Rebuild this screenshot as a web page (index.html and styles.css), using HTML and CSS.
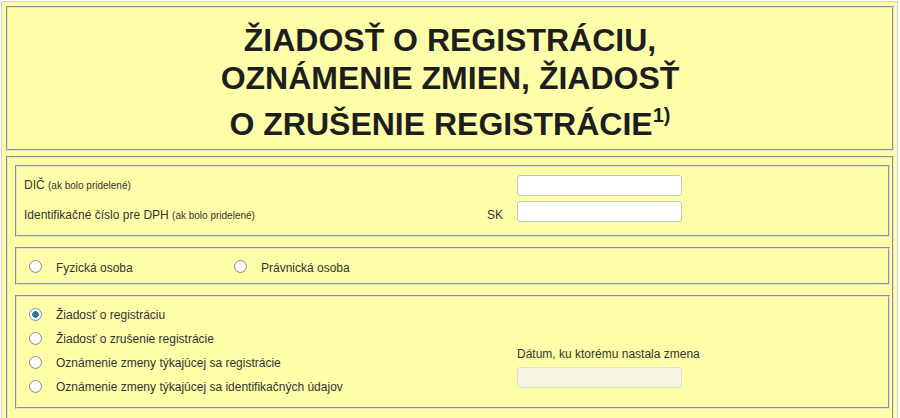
FILE: index.html
```html
<!DOCTYPE html>
<html lang="sk">
<head>
<meta charset="utf-8">
<title>Žiadosť o registráciu</title>
<link rel="stylesheet" href="styles.css">
</head>
<body>
<div class="page">
  <div class="box header">
    <h1 class="title">
      <span class="tline">ŽIADOSŤ O REGISTRÁCIU,</span>
      <span class="tline">OZNÁMENIE ZMIEN, ŽIADOSŤ</span>
      <span class="tline last">O ZRUŠENIE REGISTRÁCIE<sup class="note">1)</sup></span>
    </h1>
  </div>
  <div class="box main">
    <div class="sub ids">
      <div class="row">
        <div class="lcell"><span class="lbl">DIČ <small>(ak bolo pridelené)</small></span></div>
        <input class="field" type="text">
      </div>
      <div class="row">
        <div class="lcell low"><span class="lbl">Identifikačné číslo pre DPH <small>(ak bolo pridelené)</small></span><span class="sk">SK</span></div>
        <input class="field" type="text">
      </div>
    </div>
    <div class="sub persons">
      <label class="opt wide"><input type="radio" name="osoba" class="radio"><span>Fyzická osoba</span></label>
      <label class="opt"><input type="radio" name="osoba" class="radio"><span>Právnická osoba</span></label>
    </div>
    <div class="sub kinds">
      <div class="optlist">
        <label class="opt"><input type="radio" name="druh" class="radio" checked><span>Žiadosť o registráciu</span></label>
        <label class="opt"><input type="radio" name="druh" class="radio"><span>Žiadosť o zrušenie registrácie</span></label>
        <label class="opt"><input type="radio" name="druh" class="radio"><span>Oznámenie zmeny týkajúcej sa registrácie</span></label>
        <label class="opt"><input type="radio" name="druh" class="radio"><span>Oznámenie zmeny týkajúcej sa identifikačných údajov</span></label>
      </div>
      <div class="datecol">
        <span class="lbl">Dátum, ku ktorému nastala zmena</span>
        <input class="field" type="text" disabled>
      </div>
    </div>
    <div class="sub spacer"></div>
  </div>
</div>
</body>
</html>
```
FILE: styles.css
```css
html, body {
  margin: 0;
  padding: 0;
  background: #ffffff;
}
body {
  font-family: "Liberation Sans", Arial, sans-serif;
  font-size: 12px;
  color: #333333;
  overflow: hidden;
}
.page {
  margin: 1px 0 0 1px;
  width: 897px;
  box-sizing: border-box;
  border: 1px solid #d2d2d6;
  border-bottom: none;
  background: #ffffaa;
  padding: 4px 3px 0 4px;
}
.box,
.sub {
  border: 2px groove #e4e4d6;
}
.header {
  padding: 13px 0 0 0;
  height: 128px;
}
.title {
  margin: 0;
  font-family: "Liberation Sans", Arial, sans-serif;
  font-weight: bold;
  font-size: 32px;
  color: #1e1e1e;
  text-align: center;
}
.tline {
  display: block;
  line-height: 38px;
}
.tline.last {
  margin-top: 8px;
}
.note {
  font-size: 20px;
  line-height: 0;
  vertical-align: 13px;
}
.main {
  margin-top: 5px;
  padding: 7px 2px 0 7px;
}
.sub + .sub {
  margin-top: 10px;
}
.ids {
  padding: 5px 0 11px 0;
}
.row {
  display: flex;
  align-items: center;
  height: 26px;
}
.lcell {
  width: 500px;
  box-sizing: border-box;
  padding: 0 14px 0 7px;
  display: flex;
  align-items: center;
  justify-content: space-between;
}
.lcell.low {
  padding-top: 8px;
}
.lbl small {
  font-size: 10px;
}
.sk {
  font-size: 12px;
}
.field {
  width: 165px;
  height: 21px;
  box-sizing: border-box;
  border: 1px solid #c4c4bc;
  border-radius: 3px;
  background: #ffffff;
  margin: 0;
  padding: 0 4px;
  font: inherit;
}
.field:disabled {
  background: #f5f5e1;
  border-color: #e0e0cc;
}
.persons {
  height: 33px;
  display: flex;
  align-items: center;
  padding-top: 1px;
  box-sizing: content-box;
}
.opt {
  display: flex;
  align-items: center;
  height: 24px;
  padding-left: 12px;
  box-sizing: border-box;
}
.opt.wide {
  width: 205px;
}
.opt span {
  padding-top: 2px;
}
.radio {
  appearance: none;
  -webkit-appearance: none;
  width: 13px;
  height: 13px;
  margin: 0 14px 0 0;
  border: 1px solid #8e8e8e;
  border-radius: 50%;
  background: radial-gradient(circle at 50% 40%, #ffffff 40%, #e6e6e6 100%);
  box-sizing: border-box;
  flex: none;
}
.radio:checked {
  border-color: #6f97a8;
  background: radial-gradient(circle, #2e7896 0, #2e7896 3px, #ffffff 3.6px, #ffffff 100%);
}
.kinds {
  display: flex;
  padding: 5px 0 9px 0;
}
.optlist {
  width: 500px;
}
.datecol {
  display: flex;
  flex-direction: column;
  padding-top: 45px;
}
.datecol .lbl {
  line-height: 14px;
  margin-bottom: 6px;
}
.spacer {
  height: 40px;
}
```
